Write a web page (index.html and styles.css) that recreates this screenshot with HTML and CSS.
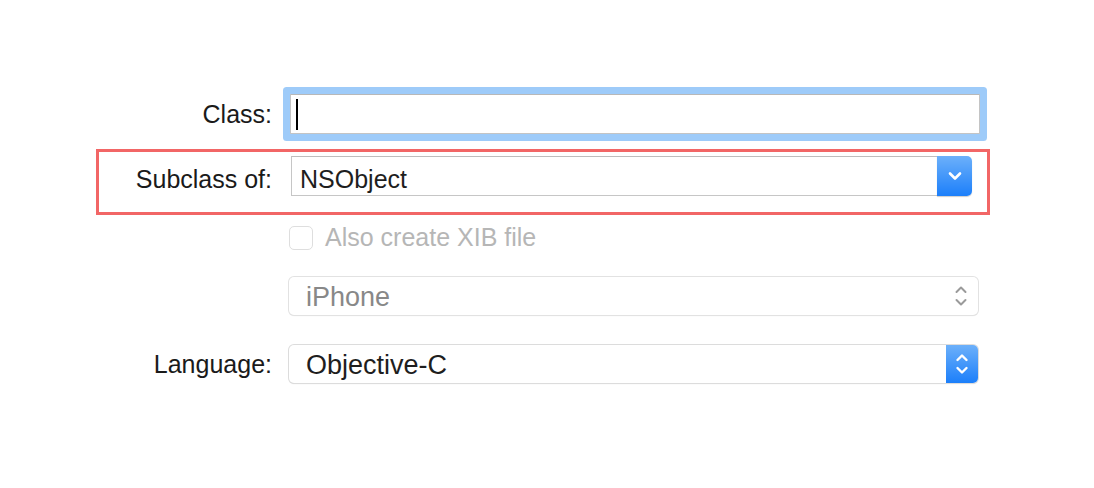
FILE: index.html
```html
<!DOCTYPE html>
<html>
<head>
<meta charset="utf-8">
<link rel="stylesheet" href="styles.css">
</head>
<body>
<div class="form">
  <div class="row row-class">
    <label class="label">Class:</label>
    <div class="text-field"><span class="caret"></span></div>
  </div>

  <div class="row row-sub highlight">
    <label class="label label-sub">Subclass of:</label>
    <div class="combo">
      <span class="combo-text">NSObject</span>
      <span class="combo-btn">
        <svg width="14" height="10" viewBox="0 0 14 10"><path d="M2 2.5 L7 7.5 L12 2.5" fill="none" stroke="#fff" stroke-width="2.6" stroke-linecap="round" stroke-linejoin="round"/></svg>
      </span>
    </div>
  </div>

  <div class="row row-check">
    <span class="label"></span>
    <span class="checkbox"></span>
    <span class="check-text">Also create XIB file</span>
  </div>

  <div class="row row-device">
    <span class="label"></span>
    <div class="popup disabled">
      <span class="popup-text">iPhone</span>
      <span class="stepper">
        <svg width="14" height="26" viewBox="0 0 14 26"><path d="M2.5 9 L7 4.5 L11.5 9 M2.5 17 L7 21.5 L11.5 17" fill="none" stroke="#9a9a9a" stroke-width="2" stroke-linecap="round" stroke-linejoin="round"/></svg>
      </span>
    </div>
  </div>

  <div class="row row-lang">
    <label class="label">Language:</label>
    <div class="popup">
      <span class="popup-text">Objective-C</span>
      <span class="popup-btn">
        <svg width="14" height="26" viewBox="0 0 14 26"><path d="M2.5 9 L7 4.5 L11.5 9 M2.5 17 L7 21.5 L11.5 17" fill="none" stroke="#fff" stroke-width="2.4" stroke-linecap="round" stroke-linejoin="round"/></svg>
      </span>
    </div>
  </div>
</div>
</body>
</html>
```

FILE: styles.css
```css
* { box-sizing: border-box; }
html, body {
  margin: 0;
  padding: 0;
  background: #ffffff;
  width: 1094px;
  height: 488px;
  overflow: hidden;
}
body {
  font-family: "Liberation Sans", Arial, sans-serif;
  font-size: 25px;
  color: #1c1c1c;
}
.form {
  display: flex;
  flex-direction: column;
  padding-top: 94px;
}
.row {
  display: flex;
  align-items: center;
}
.label {
  width: 272px;
  flex: none;
  text-align: right;
  line-height: 40px;
  height: 40px;
  color: #1a1a1a;
}

/* Class */
.row-class { height: 40px; }
.text-field {
  margin-left: 18px;
  width: 690px;
  height: 40px;
  background: #fff;
  border: 1px solid #c4c4c4;
  border-top-color: #b8b8b8;
  box-shadow: 0 0 0 7px #9ecbf9;
  border-radius: 1px;
  display: flex;
  align-items: center;
  padding-left: 5px;
}
.caret {
  width: 2px;
  height: 31px;
  background: #000;
}

/* Subclass highlight */
.highlight {
  margin-top: 15px;
  margin-left: 96px;
  width: 894px;
  height: 66px;
  border: 3px solid #f26666;
  align-items: flex-start;
  padding-top: 4px;
}
.label-sub {
  width: 173px;
  margin-top: 3px;
}
.combo {
  margin-left: 19px;
  width: 681px;
  height: 40px;
  display: flex;
}
.combo-text {
  flex: 1;
  border: 1px solid #c6c6c6;
  border-right: none;
  border-top-color: #bdbdbd;
  padding: 8px 0 0 8px;
  line-height: 28px;
  color: #1e1e1e;
}
.combo-btn {
  width: 35px;
  flex: none;
  background: linear-gradient(#6cb0fa, #1c7ffa);
  border-radius: 0 5px 5px 0;
  display: flex;
  align-items: center;
  justify-content: center;
  box-shadow: 0 1px 1px rgba(0,0,0,0.2);
}

/* Checkbox */
.row-check {
  margin-top: 11px;
  height: 24px;
}
.row-check .label { height: 24px; }
.checkbox {
  margin-left: 17px;
  width: 24px;
  height: 24px;
  border: 1px solid #dedede;
  border-radius: 5px;
  background: #fff;
  flex: none;
}
.check-text {
  margin-left: 12px;
  color: #b6b6b6;
  line-height: 24px;
  margin-top: -2px;
}

/* Popups */
.row-device { margin-top: 27px; height: 38px; }
.row-lang { margin-top: 30px; height: 38px; }
.popup {
  margin-left: 17px;
  width: 689px;
  height: 38px;
  display: flex;
  border-radius: 5px;
  background: #fff;
  box-shadow: 0 0 0 1px #dcdcdc, 0 1px 1px rgba(0,0,0,0.18);
}
.popup-text {
  flex: 1;
  padding: 3px 0 0 17px;
  line-height: 35px;
  font-size: 27px;
  color: #1e1e1e;
}
.popup.disabled .popup-text { color: #888888; }
.popup.disabled { box-shadow: 0 0 0 1px #e2e2e2, 0 1px 1px rgba(0,0,0,0.12); }
.stepper {
  width: 32px;
  display: flex;
  align-items: center;
  justify-content: center;
  padding-right: 2px;
}
.popup-btn {
  width: 32px;
  flex: none;
  background: linear-gradient(#6cb0fa, #1c7ffa);
  border-radius: 0 5px 5px 0;
  display: flex;
  align-items: center;
  justify-content: center;
}
```
